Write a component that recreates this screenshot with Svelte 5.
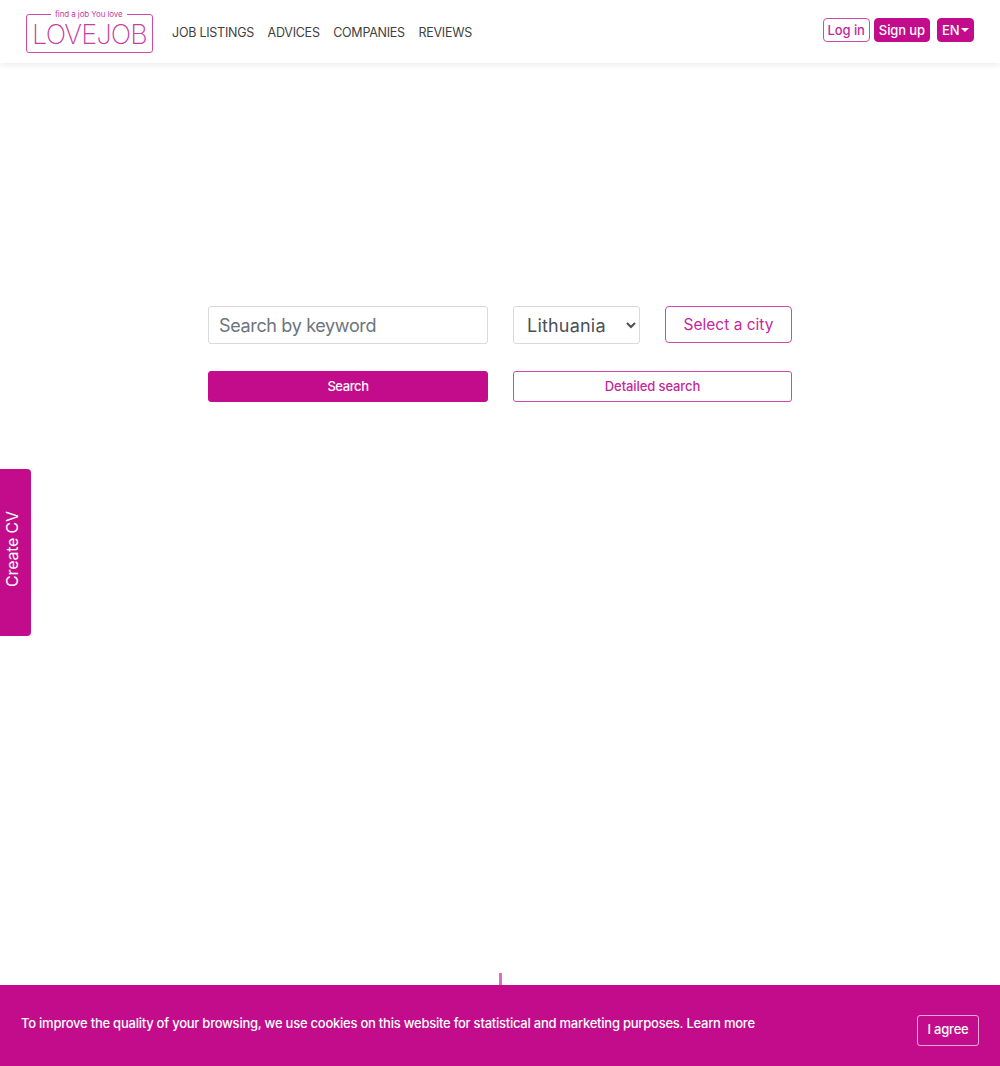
<script>
  const navItems = ['JOB LISTINGS', 'ADVICES', 'COMPANIES', 'REVIEWS'];
</script>

<div class="page">
  <header class="header">
    <a class="logo" href="#home">
      <span class="tagline">find a job You love</span>
      <span class="wordmark">LOVEJOB</span>
    </a>
    <nav class="nav">
      {#each navItems as item}
        <a href="#nav">{item}</a>
      {/each}
    </nav>
    <div class="actions">
      <button class="small outline">Log in</button>
      <button class="small solid">Sign up</button>
      <button class="small solid lang">EN<span class="caret"></span></button>
    </div>
  </header>

  <main class="search">
    <input class="field keyword" placeholder="Search by keyword" />
    <select class="field country">
      <option>Lithuania</option>
    </select>
    <button class="city">Select a city</button>
    <button class="submit solid">Search</button>
    <button class="submit outline detailed">Detailed search</button>
  </main>
</div>

<button class="cv-tab"><span>Create CV</span></button>
<div class="loader"></div>

<div class="cookie">
  <p>To improve the quality of your browsing, we use cookies on this website for statistical and marketing purposes. <a href="#more">Learn more</a></p>
  <button class="agree">I agree</button>
</div>

<style>
  :global(body) {
    margin: 0;
    background: #fff;
    font-family: Inter, "Open Sans", "Liberation Sans", sans-serif;
    color: #212529;
    overflow: hidden;
  }

  button,
  input,
  select {
    font-family: inherit;
    box-sizing: border-box;
  }

  .page {
    height: 1066px;
  }

  .header {
    height: 63px;
    box-sizing: border-box;
    display: flex;
    align-items: center;
    padding: 0 26px;
    background: #fff;
    box-shadow: 0 2px 6px rgba(0, 0, 0, 0.08);
  }

  .logo {
    position: relative;
    display: flex;
    align-items: center;
    justify-content: center;
    box-sizing: border-box;
    width: 127px;
    height: 39px;
    margin-top: 3px;
    border: 1px solid #cf4aa8;
    border-radius: 3px;
    color: #c2409f;
    text-decoration: none;
  }

  .tagline {
    position: absolute;
    top: -6px;
    left: 24px;
    padding: 0 4px;
    background: #fff;
    font-size: 8px;
    line-height: 10px;
    letter-spacing: -0.1px;
    white-space: nowrap;
  }

  .wordmark {
    font-size: 27px;
    font-weight: 200;
    line-height: 30px;
    letter-spacing: -0.8px;
    margin-top: 3px;
    white-space: nowrap;
  }

  .nav {
    display: flex;
    gap: 13.5px;
    margin-left: 19px;
    padding-top: 2px;
  }

  .nav a {
    color: #3f3f3f;
    font-size: 12.5px;
    line-height: 20px;
    letter-spacing: -0.25px;
    text-decoration: none;
    white-space: nowrap;
  }

  .actions {
    display: flex;
    gap: 4px;
    margin-left: auto;
    margin-top: -3px;
  }

  .small {
    height: 24px;
    padding: 0 4px;
    border-radius: 4px;
    font-size: 13px;
    font-weight: 500;
    letter-spacing: -0.1px;
    white-space: nowrap;
  }

  .solid {
    background: #c20c8c;
    border: 1px solid #c20c8c;
    color: #fff;
  }

  .outline {
    background: #fff;
    border: 1px solid #cf4aa8;
    color: #c4289a;
  }

  .lang {
    margin-left: 3px;
    width: 37px;
    display: flex;
    align-items: center;
  }

  .caret {
    width: 0;
    height: 0;
    margin-left: 2px;
    border-top: 4px solid #fff;
    border-left: 4px solid transparent;
    border-right: 4px solid transparent;
  }

  .search {
    width: 584px;
    margin: 243px auto 0;
    display: grid;
    grid-template-columns: 280px 127px 127px;
    column-gap: 25px;
    row-gap: 27px;
  }

  .field {
    height: 38px;
    background: #fff;
    border: 1px solid #d8dadc;
    border-radius: 3px;
    font-size: 18px;
    color: #495057;
  }

  .keyword {
    width: 100%;
    padding: 0 10px;
    letter-spacing: -0.35px;
  }

  .keyword::placeholder {
    color: #6c757d;
    opacity: 1;
  }

  .country {
    width: 100%;
    padding: 0 0 0 9px;
    letter-spacing: 0.2px;
  }

  .city {
    height: 37px;
    background: #fff;
    border: 1px solid #cf4aa8;
    border-radius: 4px;
    color: #c4289a;
    font-size: 15.5px;
    padding: 0 0 1px;
  }

  .submit {
    height: 31px;
    border-radius: 3px;
    font-size: 13px;
    font-weight: 500;
    letter-spacing: -0.1px;
    padding: 0 0 2px;
  }

  .search .solid {
    letter-spacing: -0.4px;
  }

  .detailed {
    width: 279px;
    grid-column: 2 / 4;
  }

  .cv-tab {
    position: fixed;
    left: 0;
    top: 469px;
    width: 31px;
    height: 167px;
    padding: 0 0 8px;
    border: 0;
    border-radius: 0 4px 4px 0;
    background: #c20c8c;
    color: #fff;
    font-size: 16px;
    letter-spacing: -0.2px;
    display: flex;
    align-items: center;
    justify-content: center;
  }

  .cv-tab span {
    transform: rotate(-90deg) translateY(-4px);
    white-space: nowrap;
  }

  .loader {
    position: fixed;
    left: 499px;
    top: 973px;
    width: 3px;
    height: 12px;
    background: #e06cc0;
  }

  .cookie {
    position: fixed;
    left: 0;
    right: 0;
    bottom: 0;
    height: 81px;
    box-sizing: border-box;
    display: flex;
    align-items: center;
    justify-content: space-between;
    padding: 0 21px;
    background: #c20c8c;
    color: #fff;
  }

  .cookie p {
    margin: 0 0 5px;
    font-size: 13px;
    font-weight: 500;
    line-height: 20px;
    letter-spacing: -0.24px;
    white-space: nowrap;
  }

  .cookie a {
    color: #fff;
    text-decoration: none;
  }

  .agree {
    width: 62px;
    height: 31px;
    margin-top: 9px;
    padding: 0 0 2px;
    background: transparent;
    border: 1px solid #eea6d8;
    border-radius: 3px;
    color: #fff;
    font-size: 13px;
    font-weight: 500;
    letter-spacing: -0.2px;
  }
</style>
